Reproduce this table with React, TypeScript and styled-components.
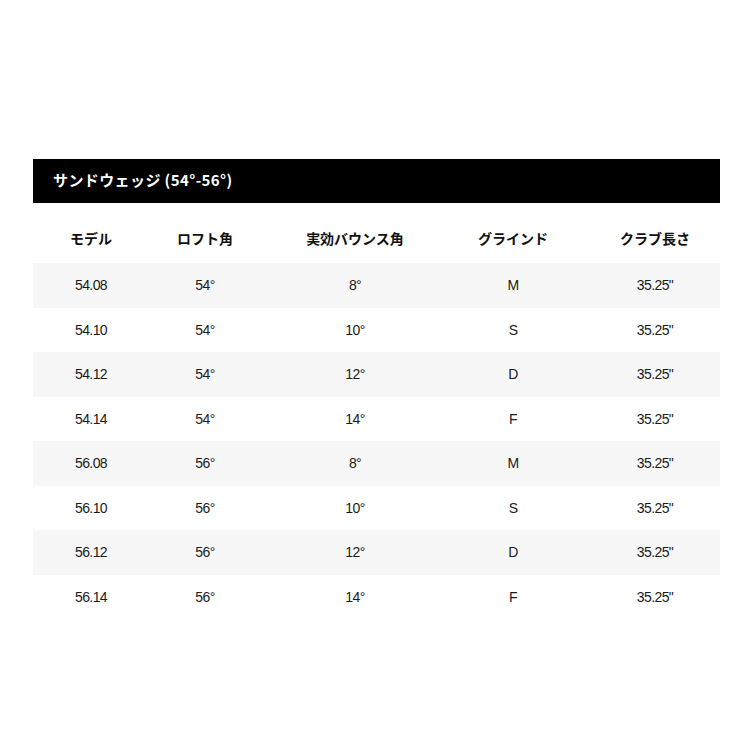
import React from 'react';
import styled, { createGlobalStyle } from 'styled-components';

const GlobalStyle = createGlobalStyle`
  html, body {
    margin: 0;
    padding: 0;
    background: #ffffff;
  }
`;

const Page = styled.div`
  width: 750px;
  height: 750px;
  padding: 159px 30px 0 33px;
  box-sizing: border-box;
`;

const Table = styled.div`
  width: 687px;
  display: flex;
  flex-direction: column;
`;

const TitleBar = styled.div`
  height: 44px;
  background: #000000;
  color: #ffffff;
  display: flex;
  align-items: center;
  padding-left: 20px;
  padding-bottom: 3px;
  box-sizing: border-box;
  font-family: "Noto Sans CJK JP", "Liberation Sans", sans-serif;
  font-weight: 700;
  font-size: 15px;
  letter-spacing: 0.4px;
`;

const Row = styled.div<{ $shaded?: boolean; $head?: boolean }>`
  display: grid;
  grid-template-columns: 116px 112px 188px 128px 1fr;
  height: ${(p) => (p.$head ? '60px' : '44.5px')};
  background: ${(p) => (p.$shaded ? '#f7f7f7' : '#ffffff')};
  align-items: center;
`;

const HeadCell = styled.div<{ $shift?: number }>`
  text-align: center;
  padding-left: ${(p) => p.$shift ?? 0}px;
  font-family: "Noto Sans CJK JP", "Liberation Sans", sans-serif;
  font-weight: 700;
  font-size: 14px;
  color: #111111;
  padding-top: 10px;
`;

const Cell = styled.div<{ $shift?: number }>`
  text-align: center;
  padding-left: ${(p) => p.$shift ?? 0}px;
  font-family: "Liberation Sans", Arial, sans-serif;
  font-size: 14px;
  letter-spacing: -0.6px;
  color: #1a1a1a;
`;

const headers = ['モデル', 'ロフト角', '実効バウンス角', 'グラインド', 'クラブ長さ'];

const rows = [
  ['54.08', '54°', '8°', 'M', '35.25"'],
  ['54.10', '54°', '10°', 'S', '35.25"'],
  ['54.12', '54°', '12°', 'D', '35.25"'],
  ['54.14', '54°', '14°', 'F', '35.25"'],
  ['56.08', '56°', '8°', 'M', '35.25"'],
  ['56.10', '56°', '10°', 'S', '35.25"'],
  ['56.12', '56°', '12°', 'D', '35.25"'],
  ['56.14', '56°', '14°', 'F', '35.25"'],
];

const shifts = [0, 0, 0, 0, 13];

export default function App() {
  return (
    <Page>
      <GlobalStyle />
      <Table>
        <TitleBar>サンドウェッジ (54°-56°)</TitleBar>
        <Row $head>
          {headers.map((h, i) => (
            <HeadCell key={h} $shift={shifts[i]}>{h}</HeadCell>
          ))}
        </Row>
        {rows.map((r, i) => (
          <Row key={r[0]} $shaded={i % 2 === 0}>
            {r.map((c, j) => (
              <Cell key={j} $shift={shifts[j]}>{c}</Cell>
            ))}
          </Row>
        ))}
      </Table>
    </Page>
  );
}
